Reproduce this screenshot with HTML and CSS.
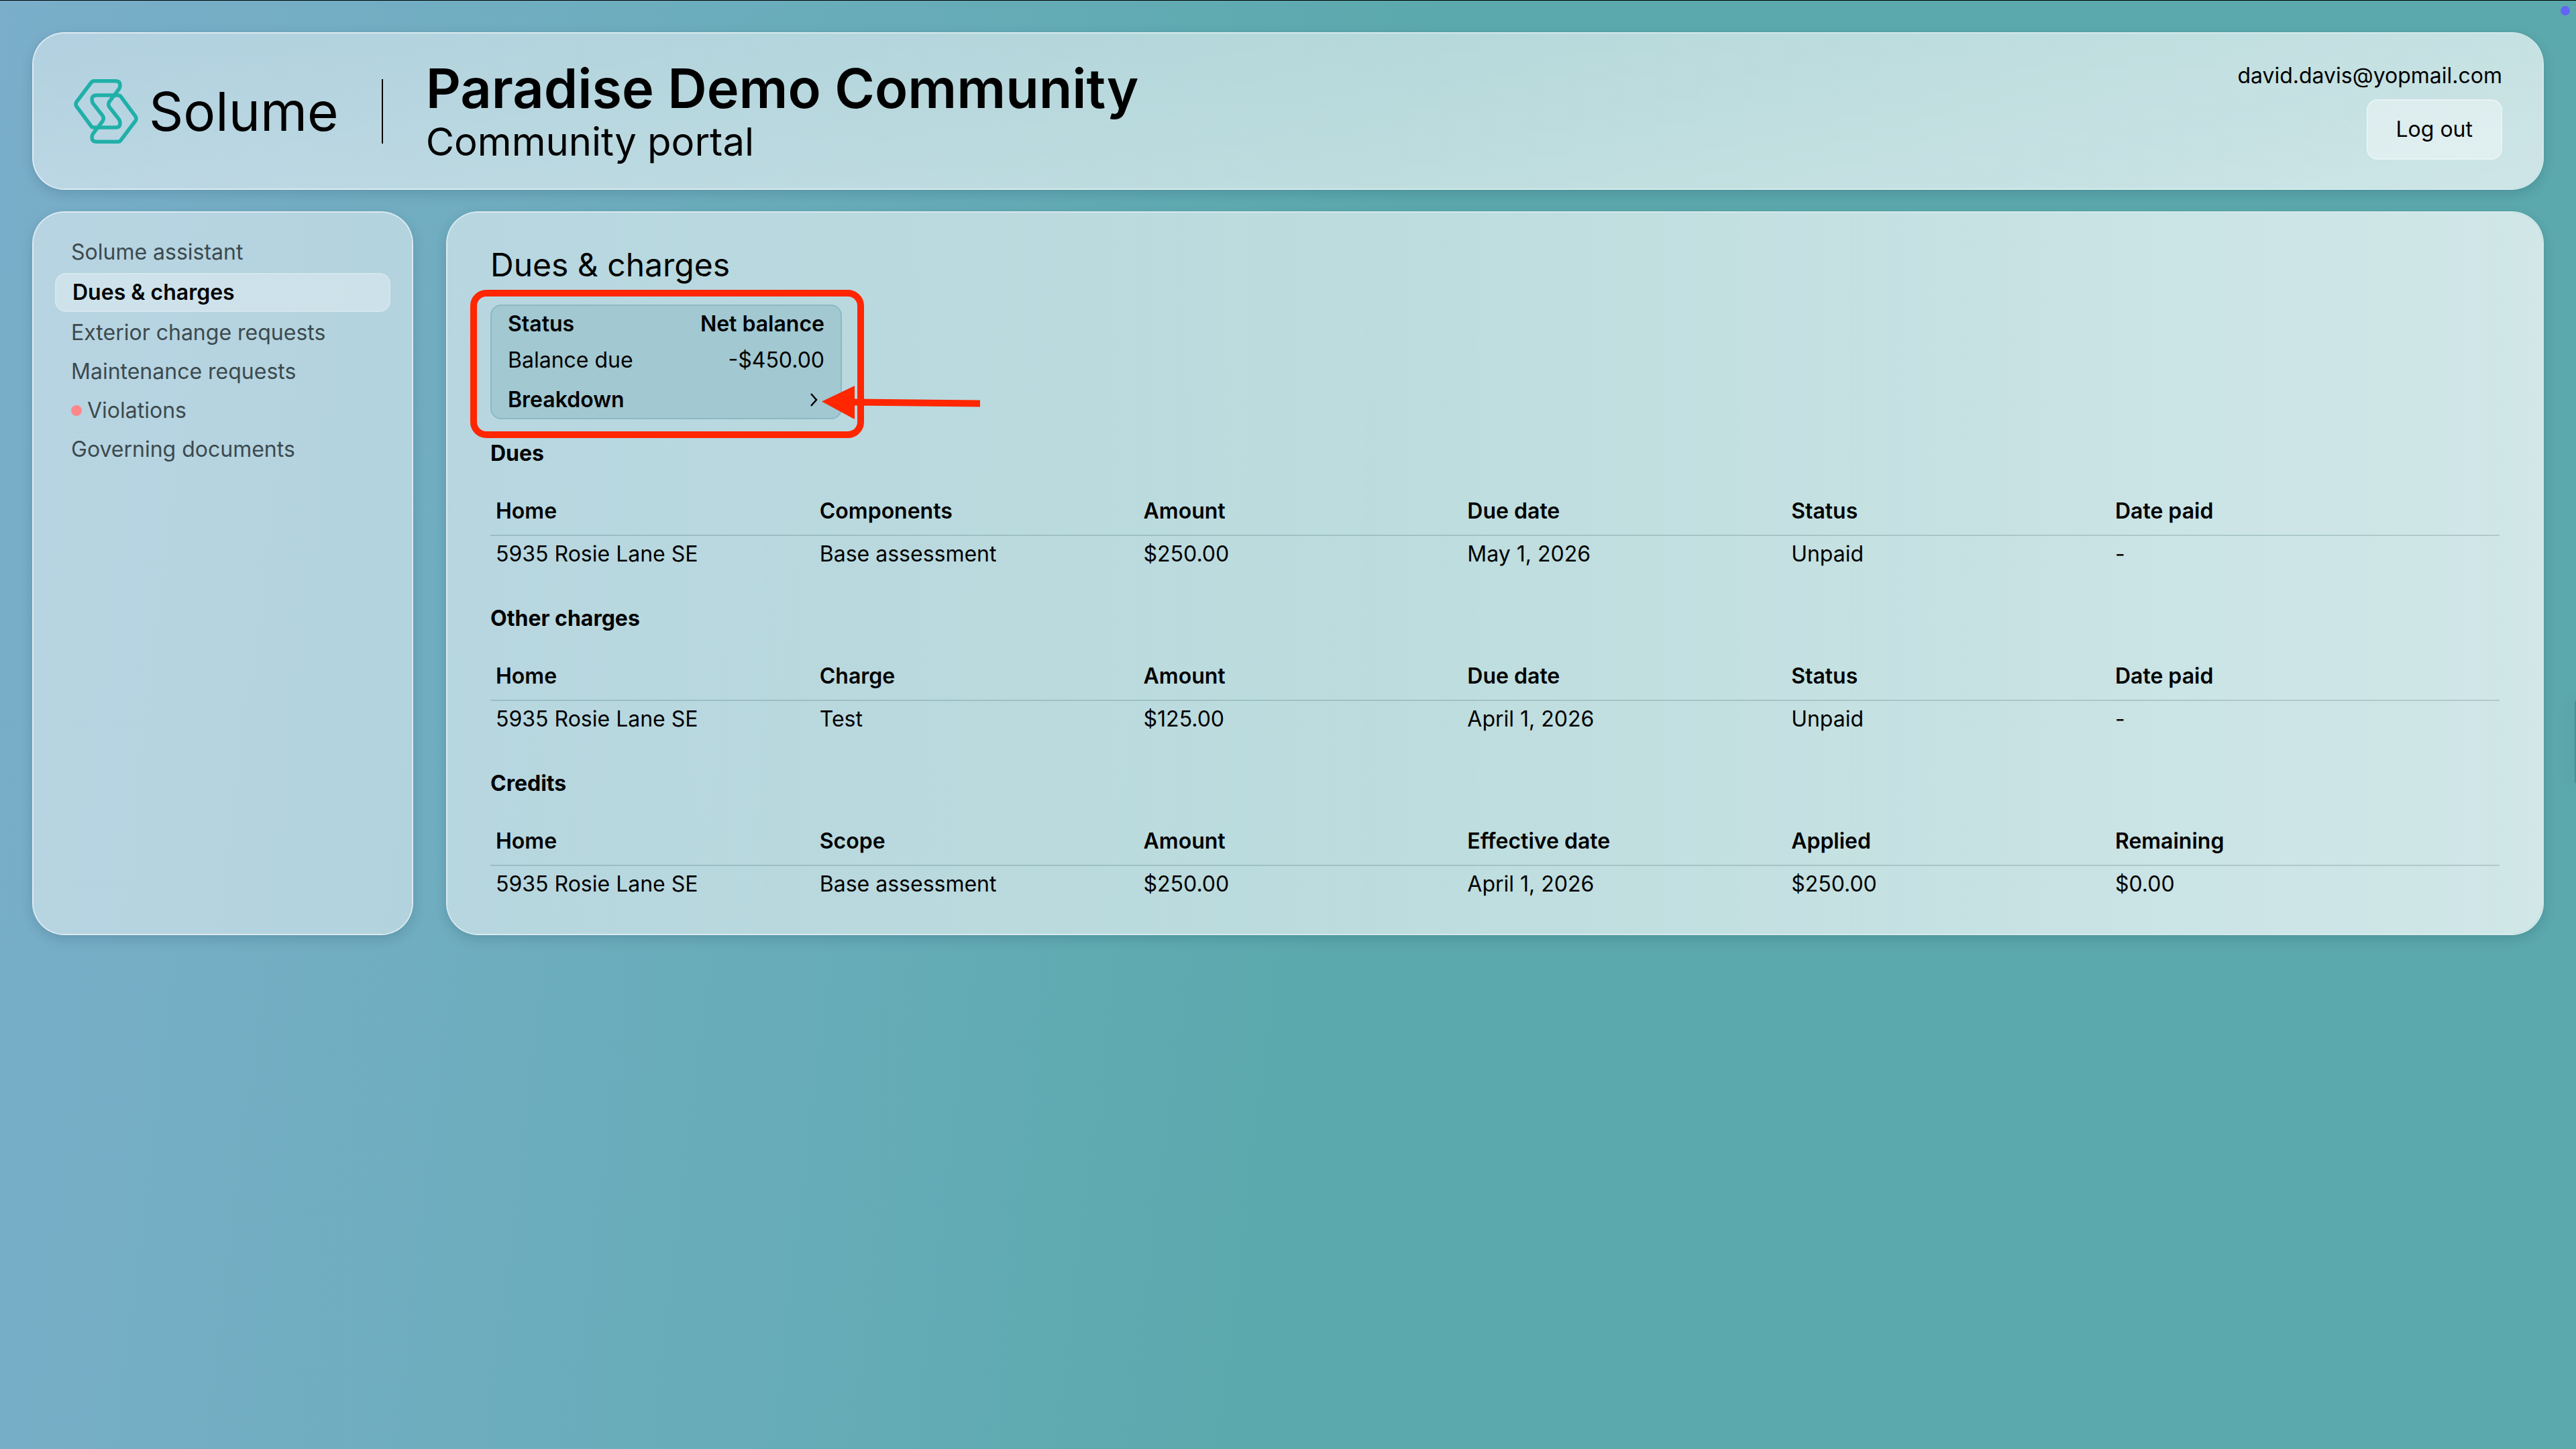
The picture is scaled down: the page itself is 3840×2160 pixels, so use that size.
FILE: index.html
```html
<!DOCTYPE html>
<html lang="en">
<head>
    <meta charset="UTF-8">
    <meta name="viewport" content="width=device-width, initial-scale=1.0">
    <title>Solume - Community portal</title>
    <link rel="stylesheet" href="styles.css">
</head>
<body>
    <span class="status-dot"></span>
    <span class="edge-tab"></span>

    <header class="card header">
        <a class="logo" href="#">
            <svg class="logo-mark" viewBox="0 0 96 96" fill="none" stroke="#20b0a8" stroke-width="5.5" stroke-linejoin="round">
                <path d="M30 2.75H62Q69 2.75 69 9Q69 12 67.5 14.5L53 33.5Q50.5 37.5 53 41.5L67.5 60Q69 62.5 69 66Q69 72 62 72H30Q27 72 25.5 69.5L4 40.5Q2 37.3 4 34L25.5 5.5Q27.5 2.75 30 2.75Z"/>
                <path d="M30 2.75H62Q69 2.75 69 9Q69 12 67.5 14.5L53 33.5Q50.5 37.5 53 41.5L67.5 60Q69 62.5 69 66Q69 72 62 72H30Q27 72 25.5 69.5L4 40.5Q2 37.3 4 34L25.5 5.5Q27.5 2.75 30 2.75Z" transform="rotate(180 48 48)"/>
            </svg>
            <span class="logo-text">Solume</span>
        </a>
        <div class="header-titles">
            <h1>Paradise Demo Community</h1>
            <p>Community portal</p>
        </div>
        <div class="user">
            <span class="user-email">david.davis@yopmail.com</span>
            <button class="logout" type="button">Log out</button>
        </div>
    </header>

    <div class="layout">
        <nav class="card sidebar">
            <a href="#">Solume assistant</a>
            <a class="active" href="#">Dues &amp; charges</a>
            <a href="#">Exterior change requests</a>
            <a href="#">Maintenance requests</a>
            <a href="#"><span class="alert-dot"></span>Violations</a>
            <a href="#">Governing documents</a>
        </nav>

        <main class="card content">
            <h2>Dues &amp; charges</h2>

            <!-- Net balance summary -->
            <div class="balance">
                <div class="balance-row strong"><span>Status</span><span>Net balance</span></div>
                <div class="balance-row"><span>Balance due</span><span>-$450.00</span></div>
                <button class="breakdown" type="button">
                    Breakdown
                    <svg class="chevron" viewBox="0 0 12 20" fill="none" stroke="#000" stroke-width="2.5"><path d="M2 1L10 10L2 19"/></svg>
                </button>
                <div class="highlight"></div>
                <svg class="arrow" viewBox="0 0 236 50" fill="#ff2600"><path d="M0 23.5L49 0V19.5L236 21.5V31.5L49 29.5V50Z"/></svg>
            </div>

            <section>
                <h3>Dues</h3>
                <table>
                    <thead>
                        <tr><th>Home</th><th>Components</th><th>Amount</th><th>Due date</th><th>Status</th><th class="last">Date paid</th></tr>
                    </thead>
                    <tbody>
                        <tr><td>5935 Rosie Lane SE</td><td>Base assessment</td><td>$250.00</td><td>May 1, 2026</td><td>Unpaid</td><td>-</td></tr>
                    </tbody>
                </table>
            </section>

            <section>
                <h3>Other charges</h3>
                <table>
                    <thead>
                        <tr><th>Home</th><th>Charge</th><th>Amount</th><th>Due date</th><th>Status</th><th class="last">Date paid</th></tr>
                    </thead>
                    <tbody>
                        <tr><td>5935 Rosie Lane SE</td><td>Test</td><td>$125.00</td><td>April 1, 2026</td><td>Unpaid</td><td>-</td></tr>
                    </tbody>
                </table>
            </section>

            <section>
                <h3>Credits</h3>
                <table>
                    <thead>
                        <tr><th>Home</th><th>Scope</th><th>Amount</th><th>Effective date</th><th>Applied</th><th class="last">Remaining</th></tr>
                    </thead>
                    <tbody>
                        <tr><td>5935 Rosie Lane SE</td><td>Base assessment</td><td>$250.00</td><td>April 1, 2026</td><td>$250.00</td><td>$0.00</td></tr>
                    </tbody>
                </table>
            </section>
        </main>
    </div>
</body>
</html>
```
FILE: styles.css
```css
* {
    box-sizing: border-box;
}

body {
    position: relative;
    margin: 0;
    min-height: 100vh;
    padding: 47px 48px;
    border-top: 1px solid #000;
    font-family: "Inter", "Liberation Sans", sans-serif;
    font-size: 32px;
    line-height: 40px;
    color: #000;
    background: linear-gradient(97deg, #7aaeca 0%, #6cadbd 25%, #5ba9ad 52%, #5ba9ad 100%);
    overflow-x: hidden;
}

h1, h2, h3, p {
    margin: 0;
}

a {
    color: inherit;
    text-decoration: none;
}

button {
    font: inherit;
    color: inherit;
    cursor: pointer;
}

.card {
    border: 2px solid rgba(255, 255, 255, 0.75);
    border-radius: 48px;
    background-clip: padding-box;
    box-shadow: 0 6px 18px rgba(0, 40, 60, 0.16);
}

.status-dot {
    position: absolute;
    top: 8px;
    right: 9px;
    width: 14px;
    height: 14px;
    border-radius: 50%;
    background: #6464f4;
}

.edge-tab {
    position: absolute;
    top: 1044px;
    right: 0;
    width: 2px;
    height: 122px;
    background: #4b9096;
    box-shadow: 0 0 30px rgba(0, 50, 60, 0.3);
}

/* Header */
.header {
    display: flex;
    align-items: center;
    height: 235px;
    padding: 0 60px;
    background-image: linear-gradient(to bottom, rgba(255, 255, 255, 0), rgba(255, 255, 255, 0.12)), linear-gradient(to right, rgba(255, 255, 255, 0.43), rgba(255, 255, 255, 0.66));
}

.logo {
    display: flex;
    align-items: center;
    gap: 16px;
    height: 96px;
    padding-right: 64px;
    border-right: 2px solid #000;
}

.logo-mark {
    width: 96px;
    height: 96px;
}

.logo-text {
    font-size: 80px;
    line-height: 96px;
}

.header-titles {
    padding-left: 64px;
}

.header-titles h1 {
    font-size: 81px;
    font-weight: 600;
    line-height: 90px;
}

.header-titles p {
    font-size: 58px;
    line-height: 68px;
}

.user {
    display: flex;
    flex-direction: column;
    align-items: flex-end;
    gap: 15px;
    margin-left: auto;
}

.logout {
    height: 90px;
    padding: 0 42px;
    border: 2px solid rgba(255, 255, 255, 0.3);
    border-radius: 16px;
    background: rgba(255, 255, 255, 0.4);
}

/* Page layout */
.layout {
    display: grid;
    grid-template-columns: 568px 1fr;
    gap: 49px;
    margin-top: 32px;
}

.sidebar {
    padding: 30px 32px;
    color: #3c4a4e;
    background-color: rgba(255, 255, 255, 0.47);
}

.sidebar a {
    display: flex;
    align-items: center;
    gap: 8px;
    height: 58px;
    padding: 0 24px;
}

.sidebar .active {
    margin: 2px 0;
    border: 2px solid rgba(255, 255, 255, 0.15);
    border-radius: 16px;
    font-weight: 600;
    color: #000;
    background: rgba(255, 255, 255, 0.33);
}

.alert-dot {
    width: 16px;
    height: 16px;
    border-radius: 50%;
    background: #ff8789;
}

.content {
    padding: 48px 64px 46px;
    background-image: linear-gradient(to right, rgba(255, 255, 255, 0.5), rgba(255, 255, 255, 0.72));
}

.content h2 {
    font-size: 48px;
    font-weight: 400;
    line-height: 60px;
}

/* Balance box */
.balance {
    position: relative;
    width: 524px;
    margin-top: 29px;
    margin-bottom: 31px;
    border: 2px solid #8cb9c5;
    border-radius: 16px;
    background: #a2c8d1;
}

.balance-row, .breakdown {
    display: flex;
    align-items: center;
    justify-content: space-between;
    width: 100%;
    padding: 0 24px;
    line-height: 54px;
}

.strong {
    font-weight: 600;
}

.breakdown {
    margin-top: 5px;
    border: none;
    font-weight: 600;
    line-height: 54px;
    background: none;
}

.chevron {
    width: 12px;
    height: 20px;
    margin-right: 10px;
}

/* Callout drawn over the balance box */
.highlight {
    position: absolute;
    top: -24px;
    left: -32px;
    width: 587px;
    height: 221px;
    border: 10px solid #ff2600;
    border-radius: 24px;
    pointer-events: none;
}

.arrow {
    position: absolute;
    top: 119px;
    left: 492px;
    width: 236px;
    height: 50px;
}

/* Tables */
section + section {
    margin-top: 48px;
}

h3 {
    font-size: 32px;
    font-weight: 700;
    line-height: 40px;
}

table {
    width: 100%;
    margin-top: 30px;
    border-collapse: separate;
    border-spacing: 0;
    table-layout: fixed;
}

th {
    width: 16.12%;
    padding: 16px 8px 15px;
    border-bottom: 2px solid rgba(0, 40, 40, 0.15);
    font-weight: 600;
    text-align: left;
}

th.last {
    width: auto;
}

td {
    padding: 7px 8px 8px;
}
```
